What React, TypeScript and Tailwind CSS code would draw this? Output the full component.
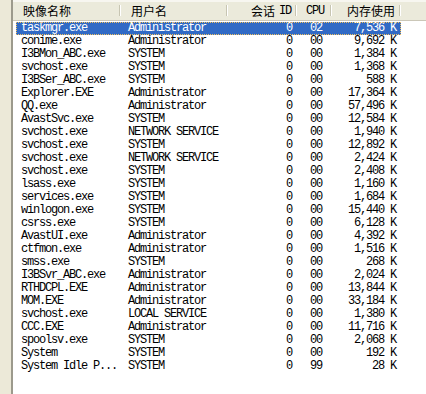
import React from 'react';

type Proc = { name: string; user: string; cpu: string; mem: string };

const procs: Proc[] = [
  { name: 'taskmgr.exe', user: 'Administrator', cpu: '02', mem: '7,536 K' },
  { name: 'conime.exe', user: 'Administrator', cpu: '00', mem: '9,692 K' },
  { name: 'I3BMon_ABC.exe', user: 'SYSTEM', cpu: '00', mem: '1,384 K' },
  { name: 'svchost.exe', user: 'SYSTEM', cpu: '00', mem: '1,368 K' },
  { name: 'I3BSer_ABC.exe', user: 'SYSTEM', cpu: '00', mem: '588 K' },
  { name: 'Explorer.EXE', user: 'Administrator', cpu: '00', mem: '17,364 K' },
  { name: 'QQ.exe', user: 'Administrator', cpu: '00', mem: '57,496 K' },
  { name: 'AvastSvc.exe', user: 'SYSTEM', cpu: '00', mem: '12,584 K' },
  { name: 'svchost.exe', user: 'NETWORK SERVICE', cpu: '00', mem: '1,940 K' },
  { name: 'svchost.exe', user: 'SYSTEM', cpu: '00', mem: '12,892 K' },
  { name: 'svchost.exe', user: 'NETWORK SERVICE', cpu: '00', mem: '2,424 K' },
  { name: 'svchost.exe', user: 'SYSTEM', cpu: '00', mem: '2,408 K' },
  { name: 'lsass.exe', user: 'SYSTEM', cpu: '00', mem: '1,160 K' },
  { name: 'services.exe', user: 'SYSTEM', cpu: '00', mem: '1,684 K' },
  { name: 'winlogon.exe', user: 'SYSTEM', cpu: '00', mem: '15,440 K' },
  { name: 'csrss.exe', user: 'SYSTEM', cpu: '00', mem: '6,128 K' },
  { name: 'AvastUI.exe', user: 'Administrator', cpu: '00', mem: '4,392 K' },
  { name: 'ctfmon.exe', user: 'Administrator', cpu: '00', mem: '1,516 K' },
  { name: 'smss.exe', user: 'SYSTEM', cpu: '00', mem: '268 K' },
  { name: 'I3BSvr_ABC.exe', user: 'Administrator', cpu: '00', mem: '2,024 K' },
  { name: 'RTHDCPL.EXE', user: 'Administrator', cpu: '00', mem: '13,844 K' },
  { name: 'MOM.EXE', user: 'Administrator', cpu: '00', mem: '33,184 K' },
  { name: 'svchost.exe', user: 'LOCAL SERVICE', cpu: '00', mem: '1,380 K' },
  { name: 'CCC.EXE', user: 'Administrator', cpu: '00', mem: '11,716 K' },
  { name: 'spoolsv.exe', user: 'SYSTEM', cpu: '00', mem: '2,068 K' },
  { name: 'System', user: 'SYSTEM', cpu: '00', mem: '192 K' },
  { name: 'System Idle P...', user: 'SYSTEM', cpu: '99', mem: '28 K' },
];

const mono = "font-['Liberation_Mono','Noto_Sans_CJK_SC',monospace]";

function HeadCell({ w, right, children }: { w: string; right?: boolean; children?: React.ReactNode }) {
  return (
    <div className={`${w} relative flex items-center h-full ${right ? 'justify-end pr-[6px]' : 'pl-[10px]'}`}>
      {children}
      <div className="absolute right-0 top-[3px] bottom-[4px] w-[2px] border-l border-[#c7c5b2] border-r border-r-white" />
    </div>
  );
}

export default function App() {
  return (
    <div className="w-[426px] h-[394px] flex bg-white overflow-hidden">
      <div className="w-[13px] h-full bg-[#ece9d8] border-r-2 border-[#9c9a8c] shrink-0" />
      <div className="flex-1 flex flex-col">
        <div className="h-[21px] flex bg-[#ebeadb] border-t-2 border-t-[#f7f6f0] border-b border-b-[#cbc7b8] shrink-0 text-[12px] text-black font-['Noto_Sans_CJK_SC',sans-serif] leading-none">
          <HeadCell w="w-[108px]">映像名称</HeadCell>
          <HeadCell w="w-[107px]">用户名</HeadCell>
          <HeadCell w="w-[69px]" right>
            会话<span className={`${mono} tracking-[-1.2px] ml-[4px]`}>ID</span>
          </HeadCell>
          <HeadCell w="w-[35px]">
            <span className={`${mono} tracking-[-1.2px] -ml-[1px]`}>CPU</span>
          </HeadCell>
          <HeadCell w="w-[69px]" right>内存使用</HeadCell>
          <div className="flex-1" />
        </div>
        <div className={`${mono} pt-[1px] text-[12px] leading-[13px] tracking-[-1.2px] text-black`}>
          {procs.map((p, i) => {
            const sel = i === 0;
            return (
              <div
                key={i}
                className={`h-[13px] flex w-[385px] ml-[3px] ${sel ? 'bg-[#316ac5] text-white outline outline-1 outline-dotted outline-[#f0c060] -outline-offset-1' : ''}`}
              >
                <div className="w-[105px] pl-[5px] whitespace-pre overflow-hidden">{p.name}</div>
                <div className="w-[107px] pl-[7px] whitespace-pre overflow-hidden">{p.user}</div>
                <div className="w-[69px] pr-[5px] text-right">0</div>
                <div className="w-[35px] pl-[13px]">{p.cpu}</div>
                <div className="w-[69px] pr-[5px] text-right whitespace-pre">{p.mem}</div>
              </div>
            );
          })}
        </div>
      </div>
    </div>
  );
}
